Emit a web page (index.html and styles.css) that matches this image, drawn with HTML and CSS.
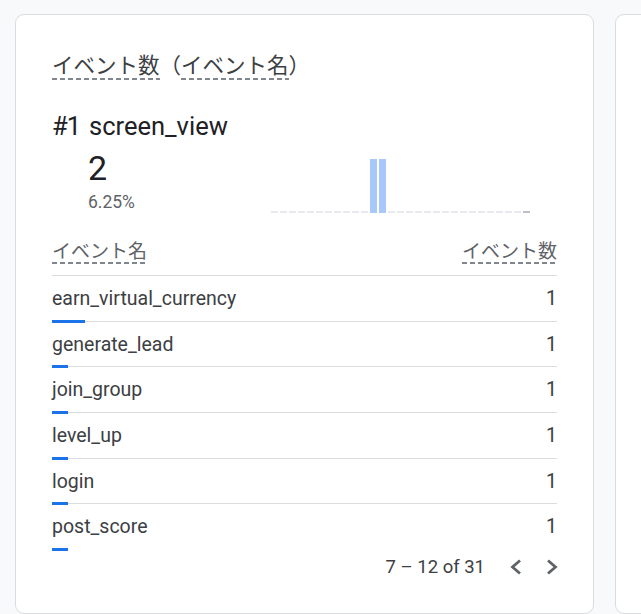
FILE: index.html
```html
<!DOCTYPE html>
<html lang="ja">
<head>
<meta charset="utf-8">
<link rel="stylesheet" href="styles.css">
</head>
<body>
<div class="board">
  <section class="card">
    <h2 class="title"><span class="dotted">イベント数</span>（<span class="dotted">イベント名</span>）</h2>
    <div class="top-name"><span class="rank">#1</span><span>screen_view</span></div>
    <div class="summary">
      <div class="stat">
        <div class="stat-value">2</div>
        <div class="stat-pct">6.25%</div>
      </div>
      <div class="spark">
        <i class="tick"></i><i class="tick"></i><i class="tick"></i><i class="tick"></i><i class="tick"></i><i class="tick"></i><i class="tick"></i><i class="tick"></i><i class="tick"></i><i class="tick"></i><i class="tick"></i>
        <i class="col"></i><i class="col"></i>
        <i class="tick"></i><i class="tick"></i><i class="tick"></i><i class="tick"></i><i class="tick"></i><i class="tick"></i><i class="tick"></i><i class="tick"></i><i class="tick"></i><i class="tick"></i><i class="tick"></i><i class="tick"></i><i class="tick"></i><i class="tick"></i><i class="tick"></i><i class="tick last"></i>
      </div>
    </div>
    <div class="table">
      <div class="thead">
        <span class="dotted">イベント名</span>
        <span class="dotted">イベント数</span>
      </div>
      <div class="row"><span>earn_virtual_currency</span><span>1</span><i class="bar wide"></i></div>
      <div class="row"><span>generate_lead</span><span>1</span><i class="bar"></i></div>
      <div class="row"><span>join_group</span><span>1</span><i class="bar"></i></div>
      <div class="row"><span>level_up</span><span>1</span><i class="bar"></i></div>
      <div class="row"><span>login</span><span>1</span><i class="bar"></i></div>
      <div class="row last"><span>post_score</span><span>1</span><i class="bar"></i></div>
    </div>
    <div class="pager">
      <span class="pager-text">7 – 12 of 31</span>
      <svg class="chev" viewBox="0 0 28 28"><path d="M19 7.5 11.5 14 19 20.5" fill="none" stroke="#5f6368" stroke-width="2.8"/></svg>
      <svg class="chev" viewBox="0 0 28 28"><path d="M9 7.5 16.5 14 9 20.5" fill="none" stroke="#5f6368" stroke-width="2.8"/></svg>
    </div>
  </section>
  <section class="card card-next"></section>
</div>
</body>
</html>
```
FILE: styles.css
```css
html, body {
  margin: 0;
  padding: 0;
  background: #f8f9fa;
  font-family: Roboto, "Noto Sans CJK JP", sans-serif;
  color: #3c4043;
}
.board {
  display: flex;
  gap: 21px;
  padding: 14px 0 0 15px;
  height: 600px;
  overflow: hidden;
}
.card {
  flex: none;
  box-sizing: border-box;
  width: 579px;
  height: 600px;
  background: #fff;
  border: 1px solid #dadce0;
  border-radius: 9px;
  padding: 36px 36px 0 36px;
}
.card-next {
  width: 200px;
}
.title {
  margin: 0;
  font-weight: 400;
  font-size: 21.5px;
  line-height: 26px;
  height: 29px;
  color: #3c4043;
  font-family: "Noto Sans CJK JP", sans-serif;
}
.dotted {
  display: inline-block;
  padding-bottom: 2px;
  background-image: repeating-linear-gradient(to right, #80868b 0 5px, transparent 5px 8px);
  background-size: 100% 2px;
  background-repeat: no-repeat;
  background-position: 0 100%;
}
.title .dotted { line-height: 26px; padding-bottom: 3px; }
.top-name {
  margin-top: 31px;
  font-size: 25.5px;
  line-height: 30px;
  color: #202124;
  display: flex;
  gap: 9px;
}
.rank { letter-spacing: -1px; }
.summary {
  display: flex;
  align-items: flex-end;
  margin-top: 7px;
  height: 65px;
}
.stat {
  width: 219px;
  padding-left: 36px;
  box-sizing: border-box;
  align-self: flex-start;
}
.stat-value {
  font-size: 34px;
  line-height: 40px;
  color: #202124;
}
.stat-pct {
  font-size: 17.5px;
  line-height: 20px;
  color: #5f6368;
  margin-top: 4px;
}
.spark {
  display: flex;
  align-items: flex-end;
  gap: 2px;
}
.spark i { display: block; width: 7px; }
.spark .tick { height: 2px; background: #e8eaed; }
.spark .tick.last { background: #bdc1c6; }
.spark .col { height: 54px; background: #a8c7fa; }
.table { margin-top: 25px; }
.thead {
  display: flex;
  justify-content: space-between;
  align-items: flex-end;
  font-family: "Noto Sans CJK JP", sans-serif;
  font-size: 19px;
  line-height: 24px;
  color: #5f6368;
  padding-bottom: 11px;
  border-bottom: 1px solid #dadce0;
}
.row {
  position: relative;
  display: flex;
  justify-content: space-between;
  align-items: center;
  box-sizing: border-box;
  height: 45.7px;
  font-size: 19.5px;
  color: #3c4043;
  border-bottom: 1px solid #dadce0;
}
.row.last { border-bottom-color: transparent; }
.bar {
  position: absolute;
  left: 0;
  bottom: -2px;
  height: 3px;
  width: 16px;
  background: #1a73e8;
}
.bar.wide { width: 33px; }
.pager {
  display: flex;
  justify-content: flex-end;
  align-items: center;
  height: 28px;
  margin-top: 3px;
  margin-right: -10px;
}
.pager-text {
  font-size: 18.5px;
  color: #3c4043;
  margin-right: 16px;
}
.chev { width: 28px; height: 28px; display: block; }
.chev + .chev { margin-left: 10px; }
```
